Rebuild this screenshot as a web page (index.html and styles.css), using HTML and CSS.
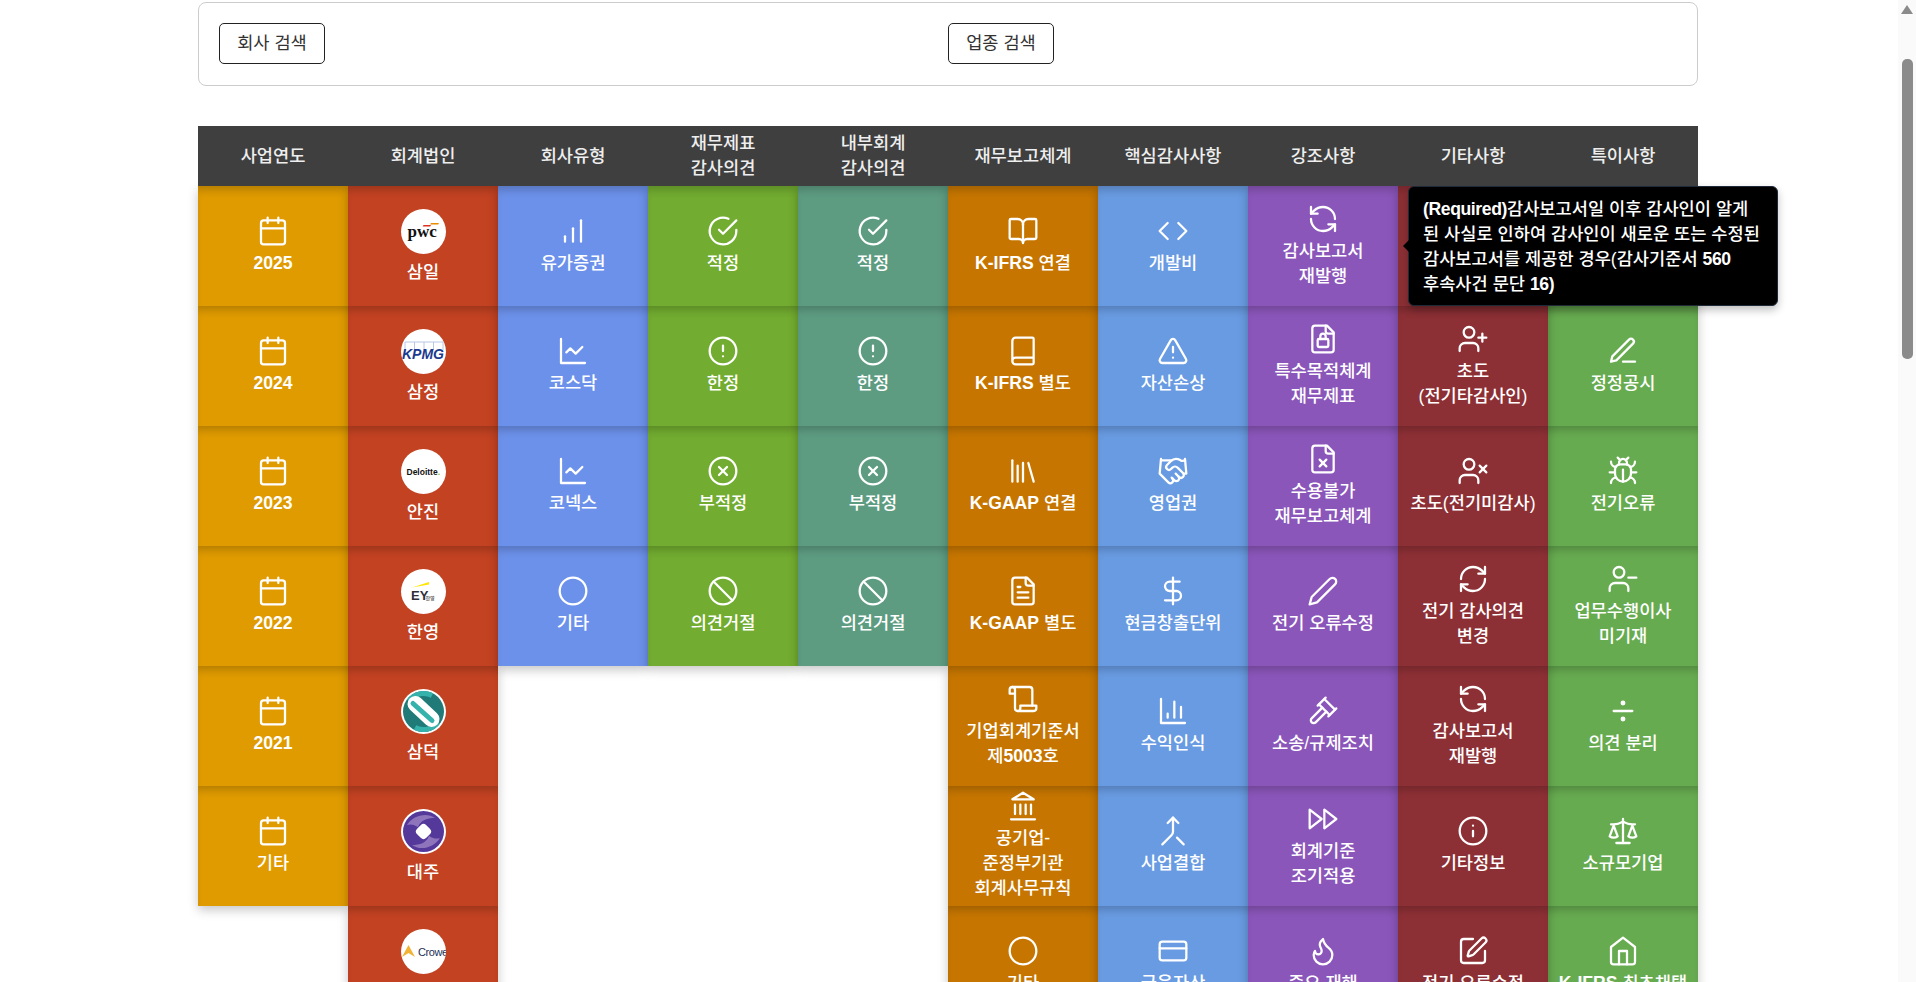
FILE: index.html
```html
<!DOCTYPE html>
<html lang="ko">
<head>
    <meta charset="UTF-8">
    <meta name="viewport" content="width=device-width, initial-scale=1.0">
    <title>감사보고서 검색</title>
    <link rel="stylesheet" href="styles.css">
</head>
<body>

<svg class="sprite" xmlns="http://www.w3.org/2000/svg">
    <symbol id="i-calendar" viewBox="0 0 24 24"><path d="M8 2v4"/><path d="M16 2v4"/><rect width="18" height="18" x="3" y="4" rx="2"/><path d="M3 10h18"/></symbol>
    <symbol id="i-bars" viewBox="0 0 24 24"><path d="M6 20v-4"/><path d="M12 20V10"/><path d="M18 20V4"/></symbol>
    <symbol id="i-line" viewBox="0 0 24 24"><path d="M3 3v18h18"/><path d="m19 9-5 5-4-4-3 3"/></symbol>
    <symbol id="i-circle" viewBox="0 0 24 24"><circle cx="12" cy="12" r="10"/></symbol>
    <symbol id="i-check" viewBox="0 0 24 24"><path d="M22 11.08V12a10 10 0 1 1-5.93-9.14"/><path d="M22 4 12 14.01l-3-3"/></symbol>
    <symbol id="i-alert" viewBox="0 0 24 24"><circle cx="12" cy="12" r="10"/><path d="M12 8v4"/><path d="M12 16h.01"/></symbol>
    <symbol id="i-xcircle" viewBox="0 0 24 24"><circle cx="12" cy="12" r="10"/><path d="m15 9-6 6"/><path d="m9 9 6 6"/></symbol>
    <symbol id="i-ban" viewBox="0 0 24 24"><circle cx="12" cy="12" r="10"/><path d="m4.9 4.9 14.2 14.2"/></symbol>
    <symbol id="i-bookopen" viewBox="0 0 24 24"><path d="M12 7v14"/><path d="M3 18a1 1 0 0 1-1-1V4a1 1 0 0 1 1-1h5a4 4 0 0 1 4 4 4 4 0 0 1 4-4h5a1 1 0 0 1 1 1v13a1 1 0 0 1-1 1h-6a3 3 0 0 0-3 3 3 3 0 0 0-3-3z"/></symbol>
    <symbol id="i-book" viewBox="0 0 24 24"><path d="M4 19.5v-15A2.5 2.5 0 0 1 6.5 2H19a1 1 0 0 1 1 1v18a1 1 0 0 1-1 1H6.5a1 1 0 0 1 0-5H20"/></symbol>
    <symbol id="i-library" viewBox="0 0 24 24"><path d="m16 6 4 14"/><path d="M12 6v14"/><path d="M8 8v12"/><path d="M4 4v16"/></symbol>
    <symbol id="i-filetext" viewBox="0 0 24 24"><path d="M15 2H6a2 2 0 0 0-2 2v16a2 2 0 0 0 2 2h12a2 2 0 0 0 2-2V7Z"/><path d="M14 2v4a2 2 0 0 0 2 2h4"/><path d="M10 9H8"/><path d="M16 13H8"/><path d="M16 17H8"/></symbol>
    <symbol id="i-scroll" viewBox="0 0 24 24"><path d="M8 21h12a2 2 0 0 0 2-2v-2H10v2a2 2 0 1 1-4 0V5a2 2 0 1 0-4 0v3h4"/><path d="M19 17V5a2 2 0 0 0-2-2H4"/></symbol>
    <symbol id="i-landmark" viewBox="0 0 24 24"><path d="M3 22h18"/><path d="M6 18v-7"/><path d="M10 18v-7"/><path d="M14 18v-7"/><path d="M18 18v-7"/><path d="M12 2l8 5H4z"/></symbol>
    <symbol id="i-code" viewBox="0 0 24 24"><path d="m16 18 6-6-6-6"/><path d="m8 6-6 6 6 6"/></symbol>
    <symbol id="i-warning" viewBox="0 0 24 24"><path d="m21.73 18-8-14a2 2 0 0 0-3.48 0l-8 14A2 2 0 0 0 4 21h16a2 2 0 0 0 1.73-3"/><path d="M12 9v4"/><path d="M12 17h.01"/></symbol>
    <symbol id="i-handshake" viewBox="0 0 24 24"><path d="m11 17 2 2a1 1 0 1 0 3-3"/><path d="m14 14 2.5 2.5a1 1 0 1 0 3-3l-3.88-3.88a3 3 0 0 0-4.24 0l-.88.88a1 1 0 1 1-3-3l2.81-2.81a5.79 5.79 0 0 1 7.06-.87l.47.28a2 2 0 0 0 1.42.25L21 4"/><path d="m21 3 1 11h-2"/><path d="M3 3 2 14l6.5 6.5a1 1 0 1 0 3-3"/><path d="M3 4h8"/></symbol>
    <symbol id="i-dollar" viewBox="0 0 24 24"><path d="M12 2v20"/><path d="M17 5H9.5a3.5 3.5 0 0 0 0 7h5a3.5 3.5 0 0 1 0 7H6"/></symbol>
    <symbol id="i-column" viewBox="0 0 24 24"><path d="M3 3v18h18"/><path d="M18 17V9"/><path d="M13 17V5"/><path d="M8 17v-3"/></symbol>
    <symbol id="i-merge" viewBox="0 0 24 24"><path d="m8 6 4-4 4 4"/><path d="M12 2v10.3a4 4 0 0 1-1.172 2.872L4 22"/><path d="m20 22-5-5"/></symbol>
    <symbol id="i-card" viewBox="0 0 24 24"><rect width="20" height="14" x="2" y="5" rx="2"/><path d="M2 10h20"/></symbol>
    <symbol id="i-ccw" viewBox="0 0 24 24"><path d="M21 12a9 9 0 0 0-9-9 9.75 9.75 0 0 0-6.74 2.74L3 8"/><path d="M3 3v5h5"/><path d="M3 12a9 9 0 0 0 9 9 9.75 9.75 0 0 0 6.74-2.74L21 16"/><path d="M16 16h5v5"/></symbol>
    <symbol id="i-cw" viewBox="0 0 24 24"><path d="M3 12a9 9 0 0 1 9-9 9.75 9.75 0 0 1 6.74 2.74L21 8"/><path d="M21 3v5h-5"/><path d="M21 12a9 9 0 0 1-9 9 9.75 9.75 0 0 1-6.74-2.74L3 16"/><path d="M8 16H3v5"/></symbol>
    <symbol id="i-filelock" viewBox="0 0 24 24"><path d="M15 2H6a2 2 0 0 0-2 2v16a2 2 0 0 0 2 2h12a2 2 0 0 0 2-2V7Z"/><path d="M14 2v4a2 2 0 0 0 2 2h4"/><rect width="8" height="6" x="8" y="12" rx="1"/><path d="M10 12v-2a2 2 0 1 1 4 0v2"/></symbol>
    <symbol id="i-filex" viewBox="0 0 24 24"><path d="M15 2H6a2 2 0 0 0-2 2v16a2 2 0 0 0 2 2h12a2 2 0 0 0 2-2V7Z"/><path d="M14 2v4a2 2 0 0 0 2 2h4"/><path d="m14.5 12.5-5 5"/><path d="m9.5 12.5 5 5"/></symbol>
    <symbol id="i-pencil" viewBox="0 0 24 24"><path d="M17 3a2.83 2.83 0 1 1 4 4L7.5 20.5 2 22l1.5-5.5Z"/></symbol>
    <symbol id="i-penline" viewBox="0 0 24 24"><path d="M12 20h9"/><path d="M16.5 3.5a2.12 2.12 0 0 1 3 3L7 19l-4 1 1-4Z"/></symbol>
    <symbol id="i-gavel" viewBox="0 0 24 24"><path d="m14.5 12.5-8 8a2.119 2.119 0 1 1-3-3l8-8"/><path d="m16 16 6-6"/><path d="m8 8 6-6"/><path d="m9 7 8 8"/><path d="m21 11-8-8"/></symbol>
    <symbol id="i-forward" viewBox="0 0 24 24"><path d="M13 19l9-7-9-7z"/><path d="M2 19l9-7-9-7z"/></symbol>
    <symbol id="i-flame" viewBox="0 0 24 24"><path d="M8.5 14.5A2.5 2.5 0 0 0 11 12c0-1.38-.5-2-1-3-1.072-2.143-.224-4.054 2-6 .5 2.5 2 4.9 4 6.5 2 1.6 3 3.5 3 5.5a7 7 0 1 1-14 0c0-1.153.433-2.294 1-3a2.5 2.5 0 0 0 2.5 2.5z"/></symbol>
    <symbol id="i-userplus" viewBox="0 0 24 24"><path d="M16 21v-2a4 4 0 0 0-4-4H6a4 4 0 0 0-4 4v2"/><circle cx="9" cy="7" r="4"/><path d="M19 8v6"/><path d="M22 11h-6"/></symbol>
    <symbol id="i-userx" viewBox="0 0 24 24"><path d="M16 21v-2a4 4 0 0 0-4-4H6a4 4 0 0 0-4 4v2"/><circle cx="9" cy="7" r="4"/><path d="m17 8 5 5"/><path d="m22 8-5 5"/></symbol>
    <symbol id="i-userminus" viewBox="0 0 24 24"><path d="M16 21v-2a4 4 0 0 0-4-4H6a4 4 0 0 0-4 4v2"/><circle cx="9" cy="7" r="4"/><path d="M22 11h-6"/></symbol>
    <symbol id="i-info" viewBox="0 0 24 24"><circle cx="12" cy="12" r="10"/><path d="M12 16v-4"/><path d="M12 8h.01"/></symbol>
    <symbol id="i-edit" viewBox="0 0 24 24"><path d="M12 3H5a2 2 0 0 0-2 2v14a2 2 0 0 0 2 2h14a2 2 0 0 0 2-2v-7"/><path d="M18.375 2.625a1 1 0 0 1 3 3l-9.013 9.014a2 2 0 0 1-.853.505l-2.873.84a.5.5 0 0 1-.62-.62l.84-2.873a2 2 0 0 1 .506-.852z"/></symbol>
    <symbol id="i-bug" viewBox="0 0 24 24"><path d="m8 2 1.88 1.88"/><path d="M14.12 3.88 16 2"/><path d="M9 7.13v-1a3.003 3.003 0 1 1 6 0v1"/><path d="M12 20c-3.3 0-6-2.7-6-6v-3a4 4 0 0 1 4-4h4a4 4 0 0 1 4 4v3c0 3.3-2.7 6-6 6"/><path d="M12 20v-9"/><path d="M6.53 9C4.6 8.8 3 7.1 3 5"/><path d="M6 13H2"/><path d="M3 21c0-2.1 1.7-3.9 3.8-4"/><path d="M20.97 5c0 2.1-1.6 3.8-3.5 4"/><path d="M22 13h-4"/><path d="M17.2 17c2.1.1 3.8 1.9 3.8 4"/></symbol>
    <symbol id="i-divide" viewBox="0 0 24 24"><circle cx="12" cy="6" r="1"/><path d="M5 12h14"/><circle cx="12" cy="18" r="1"/></symbol>
    <symbol id="i-scale" viewBox="0 0 24 24"><path d="m16 16 3-8 3 8c-.87.65-1.92 1-3 1s-2.13-.35-3-1Z"/><path d="m2 16 3-8 3 8c-.87.65-1.92 1-3 1s-2.13-.35-3-1Z"/><path d="M7 21h10"/><path d="M12 3v18"/><path d="M3 7h2c2 0 5-1 7-2 2 1 5 2 7 2h2"/></symbol>
    <symbol id="i-home" viewBox="0 0 24 24"><path d="m3 9 9-7 9 7v11a2 2 0 0 1-2 2H5a2 2 0 0 1-2-2z"/><path d="M9 22V12h6v10"/></symbol>
</svg>

<div class="page">
    <main class="content">

        <div class="search-card">
            <div><button class="search-btn">회사 검색</button></div>
            <div><button class="search-btn">업종 검색</button></div>
        </div>

        <div class="board-head">
            <div>사업연도</div>
            <div>회계법인</div>
            <div>회사유형</div>
            <div>재무제표<br>감사의견</div>
            <div>내부회계<br>감사의견</div>
            <div>재무보고체계</div>
            <div>핵심감사사항</div>
            <div>강조사항</div>
            <div>기타사항</div>
            <div>특이사항</div>
        </div>

        <div class="board">

            <div class="col col-year">
                <div class="cell"><svg class="icon"><use href="#i-calendar"/></svg><span><b>2025</b></span></div>
                <div class="cell"><svg class="icon"><use href="#i-calendar"/></svg><span><b>2024</b></span></div>
                <div class="cell"><svg class="icon"><use href="#i-calendar"/></svg><span><b>2023</b></span></div>
                <div class="cell"><svg class="icon"><use href="#i-calendar"/></svg><span><b>2022</b></span></div>
                <div class="cell"><svg class="icon"><use href="#i-calendar"/></svg><span><b>2021</b></span></div>
                <div class="cell"><svg class="icon"><use href="#i-calendar"/></svg><span>기타</span></div>
            </div>

            <div class="col col-firm">
                <div class="cell">
                    <svg class="logo" viewBox="0 0 45 45">
                        <path d="M22.500 16h7.500l-.8 1.400h-7.500z" fill="#e0301e"/><path d="M30 14h8l-.8 1.400h-8z" fill="#eb8c00"/>
                        <text x="6.500" y="28" class="logo-pwc">pwc</text>
                    </svg>
                    <span>삼일</span>
                </div>
                <div class="cell">
                    <svg class="logo" viewBox="0 0 45 45">
                        <path d="M4 21v-8h9.500v8M13.500 13h9.500v8M23 13h9.500v8M32.500 13h9.500v8" fill="none" stroke="#b9c6e6" stroke-width="1"/>
                        <text x="1" y="30" class="logo-kpmg">KPMG</text>
                    </svg>
                    <span>삼정</span>
                </div>
                <div class="cell">
                    <svg class="logo" viewBox="0 0 45 45">
                        <text x="5.500" y="26" class="logo-deloitte">Deloitte<tspan fill="#86bc25">.</tspan></text>
                    </svg>
                    <span>안진</span>
                </div>
                <div class="cell">
                    <svg class="logo" viewBox="0 0 45 45">
                        <path d="M11 18.500 28 13v2.500z" fill="#ffe600"/>
                        <text x="10" y="31" class="logo-ey">EY</text>
                        <text x="24.500" y="31" class="logo-ey-sub">한영</text>
                    </svg>
                    <span>한영</span>
                </div>
                <div class="cell">
                    <svg class="logo" viewBox="0 0 45 45">
                        <circle cx="22.500" cy="22.500" r="20.500" fill="#1f7a78"/>
                        <path d="M8 12A18 18 0 0 1 31 6.500M37 33A18 18 0 0 1 14 38.500" fill="none" stroke="#35b2ac" stroke-width="5"/>
                        <path d="M14.500 15 30.500 30" fill="none" stroke="#fff" stroke-width="16" stroke-linecap="round"/>
                        <path d="M12 14.500 31 31.500" fill="none" stroke="#35b2ac" stroke-width="5" stroke-linecap="round"/>
                    </svg>
                    <span>삼덕</span>
                </div>
                <div class="cell">
                    <svg class="logo" viewBox="0 0 45 45">
                        <circle cx="22.500" cy="22.500" r="20.500" fill="#54389a"/>
                        <path d="M6 16C12 6 26 3 34 9 26 9 20 11 17 18 12 15 9 15 6 16ZM39 29C33 39 19 42 11 36 19 36 25 34 28 27 33 30 36 30 39 29Z" fill="#8d74bb"/>
                        <rect x="16" y="16" width="13" height="13" rx="4" transform="rotate(45 22.500 22.500)" fill="#fff"/>
                    </svg>
                    <span>대주</span>
                </div>
                <div class="cell">
                    <svg class="logo" viewBox="0 0 45 45">
                        <path d="M1 28 7.500 16 14 28 7.500 24z" fill="#f2b233"/>
                        <text x="17" y="26.500" class="logo-crowe">Crowe</text>
                    </svg>
                    <span>크로우</span>
                </div>
            </div>

            <div class="col col-type">
                <div class="cell"><svg class="icon"><use href="#i-bars"/></svg><span>유가증권</span></div>
                <div class="cell"><svg class="icon"><use href="#i-line"/></svg><span>코스닥</span></div>
                <div class="cell"><svg class="icon"><use href="#i-line"/></svg><span>코넥스</span></div>
                <div class="cell"><svg class="icon"><use href="#i-circle"/></svg><span>기타</span></div>
            </div>

            <div class="col col-opinion">
                <div class="cell"><svg class="icon"><use href="#i-check"/></svg><span>적정</span></div>
                <div class="cell"><svg class="icon"><use href="#i-alert"/></svg><span>한정</span></div>
                <div class="cell"><svg class="icon"><use href="#i-xcircle"/></svg><span>부적정</span></div>
                <div class="cell"><svg class="icon"><use href="#i-ban"/></svg><span>의견거절</span></div>
            </div>

            <div class="col col-internal">
                <div class="cell"><svg class="icon"><use href="#i-check"/></svg><span>적정</span></div>
                <div class="cell"><svg class="icon"><use href="#i-alert"/></svg><span>한정</span></div>
                <div class="cell"><svg class="icon"><use href="#i-xcircle"/></svg><span>부적정</span></div>
                <div class="cell"><svg class="icon"><use href="#i-ban"/></svg><span>의견거절</span></div>
            </div>

            <div class="col col-frame">
                <div class="cell"><svg class="icon"><use href="#i-bookopen"/></svg><span><b>K-IFRS</b> 연결</span></div>
                <div class="cell"><svg class="icon"><use href="#i-book"/></svg><span><b>K-IFRS</b> 별도</span></div>
                <div class="cell"><svg class="icon"><use href="#i-library"/></svg><span><b>K-GAAP</b> 연결</span></div>
                <div class="cell"><svg class="icon"><use href="#i-filetext"/></svg><span><b>K-GAAP</b> 별도</span></div>
                <div class="cell"><svg class="icon"><use href="#i-scroll"/></svg><span>기업회계기준서<br>제<b>5003</b>호</span></div>
                <div class="cell"><svg class="icon"><use href="#i-landmark"/></svg><span>공기업-<br>준정부기관<br>회계사무규칙</span></div>
                <div class="cell"><svg class="icon"><use href="#i-circle"/></svg><span>기타</span></div>
            </div>

            <div class="col col-kam">
                <div class="cell"><svg class="icon"><use href="#i-code"/></svg><span>개발비</span></div>
                <div class="cell"><svg class="icon"><use href="#i-warning"/></svg><span>자산손상</span></div>
                <div class="cell"><svg class="icon"><use href="#i-handshake"/></svg><span>영업권</span></div>
                <div class="cell"><svg class="icon"><use href="#i-dollar"/></svg><span>현금창출단위</span></div>
                <div class="cell"><svg class="icon"><use href="#i-column"/></svg><span>수익인식</span></div>
                <div class="cell"><svg class="icon"><use href="#i-merge"/></svg><span>사업결합</span></div>
                <div class="cell"><svg class="icon"><use href="#i-card"/></svg><span>금융자산</span></div>
            </div>

            <div class="col col-emphasis">
                <div class="cell"><svg class="icon"><use href="#i-ccw"/></svg><span>감사보고서<br>재발행</span></div>
                <div class="cell"><svg class="icon"><use href="#i-filelock"/></svg><span>특수목적체계<br>재무제표</span></div>
                <div class="cell"><svg class="icon"><use href="#i-filex"/></svg><span>수용불가<br>재무보고체계</span></div>
                <div class="cell"><svg class="icon"><use href="#i-pencil"/></svg><span>전기 오류수정</span></div>
                <div class="cell"><svg class="icon"><use href="#i-gavel"/></svg><span>소송/규제조치</span></div>
                <div class="cell"><svg class="icon"><use href="#i-forward"/></svg><span>회계기준<br>조기적용</span></div>
                <div class="cell"><svg class="icon"><use href="#i-flame"/></svg><span>중요 재해</span></div>
            </div>

            <div class="col col-other">
                <div class="cell">
                    <div class="tooltip">
                        <b>(Required)</b>감사보고서일 이후 감사인이 알게<br>
                        된 사실로 인하여 감사인이 새로운 또는 수정된<br>
                        감사보고서를 제공한 경우(감사기준서 <b>560</b><br>
                        후속사건 문단 <b>16)</b>
                    </div>
                </div>
                <div class="cell"><svg class="icon"><use href="#i-userplus"/></svg><span>초도<br>(전기타감사인)</span></div>
                <div class="cell"><svg class="icon"><use href="#i-userx"/></svg><span>초도(전기미감사)</span></div>
                <div class="cell"><svg class="icon"><use href="#i-cw"/></svg><span>전기 감사의견<br>변경</span></div>
                <div class="cell"><svg class="icon"><use href="#i-ccw"/></svg><span>감사보고서<br>재발행</span></div>
                <div class="cell"><svg class="icon"><use href="#i-info"/></svg><span>기타정보</span></div>
                <div class="cell"><svg class="icon"><use href="#i-edit"/></svg><span>전기 오류수정</span></div>
            </div>

            <div class="col col-special">
                <div class="cell"></div>
                <div class="cell"><svg class="icon"><use href="#i-penline"/></svg><span>정정공시</span></div>
                <div class="cell"><svg class="icon"><use href="#i-bug"/></svg><span>전기오류</span></div>
                <div class="cell"><svg class="icon"><use href="#i-userminus"/></svg><span>업무수행이사<br>미기재</span></div>
                <div class="cell"><svg class="icon"><use href="#i-divide"/></svg><span>의견 분리</span></div>
                <div class="cell"><svg class="icon"><use href="#i-scale"/></svg><span>소규모기업</span></div>
                <div class="cell"><svg class="icon"><use href="#i-home"/></svg><span><b>K-IFRS</b> 최초채택</span></div>
            </div>

        </div>
    </main>

    <!-- page scrollbar as it looks in the scrolled view -->
    <aside class="scrollbar">
        <div class="scroll-arrow"></div>
        <div class="scroll-thumb"></div>
    </aside>
</div>

</body>
</html>
```

FILE: styles.css
```css
body {
    margin: 0;
    background: #fff;
    font-family: "Liberation Sans", "Noto Sans CJK KR", sans-serif;
    font-size: 17.6px;
    line-height: 25px;
    color: #fff;
}
b {
    font-weight: 700;
}
.sprite {
    display: none;
}
.page {
    display: flex;
    height: 982px;
    overflow: hidden;
}
.content {
    flex: 1;
    padding: 2px 0 0 198px;
    min-width: 0;
}

/* Search box */
.search-card {
    width: 1500px;
    box-sizing: border-box;
    height: 84px;
    padding: 20px;
    display: grid;
    grid-template-columns: 1fr 1fr;
    border: 1px solid #ccc;
    border-radius: 8px;
}
.search-btn {
    width: 106px;
    height: 41px;
    padding: 0;
    background: #fff;
    border: 1px solid #222;
    border-radius: 5px;
    font: inherit;
    color: #333;
}

/* Header row */
.board-head {
    position: relative;
    z-index: 3;
    width: 1500px;
    height: 60px;
    margin-top: 40px;
    display: grid;
    grid-template-columns: repeat(10, 150px);
    align-items: center;
    text-align: center;
    background: #3f3f3f;
    color: #eee;
    font-weight: 500;
}

/* Columns */
.board {
    display: flex;
    align-items: flex-start;
    width: 1500px;
}
.col {
    width: 150px;
    flex: none;
    box-shadow: 0 4px 10px rgba(0, 0, 0, 0.22);
}
.col-year { background: #e09b00; }
.col-firm { background: #c24222; }
.col-type { background: #6c91ea; }
.col-opinion { background: #72ac30; }
.col-internal { background: #5e9c82; }
.col-frame { background: #c67600; }
.col-kam { background: #699be2; }
.col-emphasis { background: #8b56ba; }
.col-other { background: #8d3035; position: relative; z-index: 2; }
.col-special { background: #67ab50; }

.cell {
    position: relative;
    height: 120px;
    box-sizing: border-box;
    padding-bottom: 1px;
    display: flex;
    flex-direction: column;
    align-items: center;
    justify-content: center;
    gap: 4px;
    text-align: center;
    font-weight: 500;
    box-shadow: inset 0 8px 8px -4px rgba(0, 0, 0, 0.2);
}
.icon {
    width: 32px;
    height: 32px;
    flex: none;
    fill: none;
    stroke: #fff;
    stroke-width: 1.7;
    stroke-linecap: round;
    stroke-linejoin: round;
}

/* Firm logos */
.logo {
    width: 45px;
    height: 45px;
    flex: none;
    margin: 2px 0;
    border-radius: 50%;
    background: #fff;
}
.logo-pwc {
    font-family: "Liberation Serif", serif;
    font-weight: 700;
    font-size: 17px;
    fill: #111;
}
.logo-kpmg {
    font-family: "Liberation Sans", sans-serif;
    font-weight: 700;
    font-style: italic;
    font-size: 14px;
    fill: #1a3a8f;
}
.logo-deloitte {
    font-family: "Liberation Sans", sans-serif;
    font-weight: 700;
    font-size: 8.5px;
    fill: #111;
}
.logo-ey {
    font-family: "Liberation Sans", sans-serif;
    font-weight: 700;
    font-size: 13px;
    fill: #2e2e38;
}
.logo-ey-sub {
    font-family: "Noto Sans CJK KR", sans-serif;
    font-size: 5px;
    fill: #555;
}
.logo-crowe {
    font-family: "Liberation Sans", sans-serif;
    font-size: 11px;
    letter-spacing: -0.4px;
    fill: #1c2f55;
}

/* Tooltip over the 기타사항 column */
.tooltip {
    position: absolute;
    left: 10px;
    top: 0;
    width: 370px;
    height: 120px;
    box-sizing: border-box;
    padding: 10px 14px;
    background: #000;
    border: 1px solid #1f2937;
    border-radius: 6px;
    box-shadow: 0 4px 8px rgba(0, 0, 0, 0.25);
    text-align: left;
    white-space: nowrap;
    font-weight: 500;
}
.tooltip b {
    letter-spacing: -0.4px;
}
.tooltip::before {
    content: "";
    position: absolute;
    left: -6px;
    top: 53px;
    border-style: solid;
    border-width: 6px 6px 6px 0;
    border-color: transparent #000 transparent transparent;
}

/* Scrollbar */
.scrollbar {
    width: 18px;
    flex: none;
    background: #fafafa;
    display: flex;
    flex-direction: column;
    align-items: center;
}
.scroll-arrow {
    margin-top: 5px;
    border-style: solid;
    border-width: 0 6px 9px 6px;
    border-color: transparent transparent #8b8b8b transparent;
}
.scroll-thumb {
    width: 11px;
    height: 300px;
    margin-top: 45px;
    background: #8b8b8b;
    border-radius: 5px;
}
```
